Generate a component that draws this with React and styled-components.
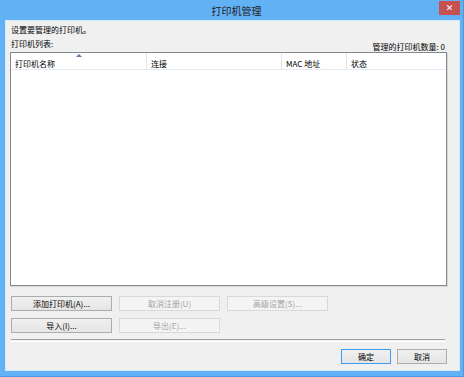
import React from 'react';
import styled, { createGlobalStyle } from 'styled-components';

const Global = createGlobalStyle`
  html, body {
    margin: 0;
    padding: 0;
    background: #62b1f5;
  }
  body {
    font-family: "Noto Sans CJK SC", "Noto Sans", sans-serif;
    font-size: 8px;
    color: #000;
  }
`;

const Frame = styled.div`
  width: 464px;
  height: 377px;
  box-sizing: border-box;
  background: #62b1f5;
  border-right: 1px solid #4d98dc;
  border-bottom: 1px solid #4d98dc;
  padding: 0 3px 5px 5px;
  display: flex;
  flex-direction: column;
`;

const TitleBar = styled.div`
  height: 20px;
  display: flex;
  align-items: center;
  justify-content: center;
  position: relative;
  font-size: 10px;
  color: #222;
  padding-left: 8px;
`;

const CloseButton = styled.div`
  position: absolute;
  top: 1px;
  right: 0;
  width: 21px;
  height: 14px;
  background: #c75050;
  color: #fff;
  font-size: 9px;
  font-weight: bold;
  font-family: "DejaVu Sans", sans-serif;
  display: flex;
  align-items: center;
  justify-content: center;
`;

const Client = styled.div`
  flex: 1;
  background: #f0f0f0;
  border: 1px solid #d6e8fa;
  display: flex;
  flex-direction: column;
  padding: 3px 12px 0 4px;
`;

const Intro = styled.div`
  line-height: 12px;
  padding-left: 1px;
`;

const LabelRow = styled.div`
  display: flex;
  justify-content: space-between;
  align-items: flex-start;
  height: 14px;
  margin-top: 2px;
  line-height: 12px;
  padding: 0 2px 0 1px;
`;

const Count = styled.span`
  margin-top: 3px;
`;

const ListBox = styled.div`
  height: 234px;
  box-sizing: border-box;
  background: #fff;
  border: 1px solid #828790;
  box-shadow: 1px 1px 0 #d8d8d8;
`;

const Header = styled.div`
  display: flex;
  height: 16px;
  border-bottom: 1px solid #e3ebf4;
`;

const Col = styled.div`
  position: relative;
  width: ${p => p.w ? `${p.w}px` : 'auto'};
  flex: ${p => p.w ? 'none' : 1};
  box-sizing: border-box;
  border-right: ${p => p.last ? 'none' : '1px solid #e5e5e5'};
  padding-left: 4px;
  display: flex;
  align-items: center;
  padding-top: 4px;
`;

const SortArrow = styled.div`
  position: absolute;
  top: 1px;
  left: 50%;
  margin-left: -3px;
  width: 0;
  height: 0;
  border-left: 3px solid transparent;
  border-right: 3px solid transparent;
  border-bottom: 3px solid #5b7ca6;
`;

const ButtonRow = styled.div`
  display: flex;
  gap: ${p => p.gap || 7}px;
  margin-top: ${p => p.top}px;
  padding-left: ${p => p.left || 0}px;
  justify-content: ${p => p.end ? 'flex-end' : 'flex-start'};
`;

const Button = styled.div`
  width: ${p => p.w}px;
  height: 15px;
  box-sizing: border-box;
  display: flex;
  align-items: center;
  justify-content: center;
  border: 1px solid ${p => (p.primary ? '#3c9cf0' : p.disabled ? '#d9d9d9' : '#acacac')};
  background: ${p =>
    p.disabled ? '#f4f4f4' : 'linear-gradient(#f0f0f0, #e5e5e5)'};
  color: ${p => (p.disabled ? '#a3a3a3' : '#000')};
  line-height: 1;
`;

const Separator = styled.div`
  margin: 6px 2px 0 1px;
  height: 1px;
  border-top: 1px solid #a0a0a0;
  border-bottom: 1px solid #fff;
`;

const columns = [
  { name: '打印机名称', w: 136, sorted: true },
  { name: '连接', w: 135 },
  { name: 'MAC 地址', w: 65 },
  { name: '状态' },
];

const App = () => (
  <>
    <Global />
    <Frame>
      <TitleBar>
        打印机管理
        <CloseButton>✕</CloseButton>
      </TitleBar>
      <Client>
        <Intro>设置要管理的打印机。</Intro>
        <LabelRow>
          <span>打印机列表:</span>
          <Count>管理的打印机数量: 0</Count>
        </LabelRow>
        <ListBox>
          <Header>
            {columns.map((c, i) => (
              <Col key={c.name} w={c.w} last={i === columns.length - 1}>
                {c.sorted && <SortArrow />}
                {c.name}
              </Col>
            ))}
          </Header>
        </ListBox>
        <ButtonRow top={10} left={1}>
          <Button w={101}>添加打印机(A)...</Button>
          <Button w={101} disabled>取消注册(U)</Button>
          <Button w={101} disabled>高级设置(S)...</Button>
        </ButtonRow>
        <ButtonRow top={7} left={1}>
          <Button w={101}>导入(I)...</Button>
          <Button w={101} disabled>导出(E)...</Button>
        </ButtonRow>
        <Separator />
        <ButtonRow top={7} gap={6} end>
          <Button w={50} primary>确定</Button>
          <Button w={50}>取消</Button>
        </ButtonRow>
      </Client>
    </Frame>
  </>
);

export default App;
